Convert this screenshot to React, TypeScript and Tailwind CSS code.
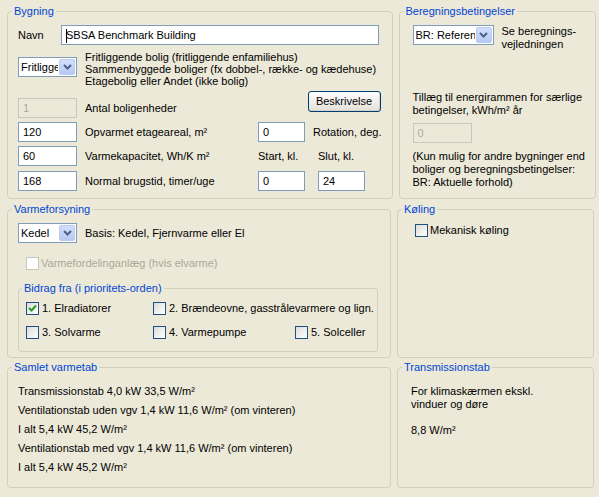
import React from "react";

function Box({ value, className = "", disabled = false }: { value: string; className?: string; disabled?: boolean }) {
  return (
    <div
      className={
        "h-[20px] shrink-0 border px-[4px] leading-[18px] " +
        (disabled ? "border-[#C9C7BA] bg-[#ECE9D8] text-[#ACA899] " : "border-[#7F9DB9] bg-white ") +
        className
      }
    >
      {value}
    </div>
  );
}

function Combo({ value, className = "" }: { value: string; className?: string }) {
  return (
    <div className={"flex h-[20px] shrink-0 border border-[#7F9DB9] bg-white " + className}>
      <div className="min-w-0 flex-1 overflow-hidden pl-[2px] leading-[18px]">{value}</div>
      <div className="m-px flex w-[16px] shrink-0 items-center justify-center rounded-[2px] border border-[#B8CBF5] bg-linear-to-b from-[#D3DEFB] to-[#B7C9F4]">
        <svg width="9" height="6" viewBox="0 0 9 6">
          <path d="M1 1 L4.5 4.5 L8 1" fill="none" stroke="#4D6185" strokeWidth="2" />
        </svg>
      </div>
    </div>
  );
}

function Check({ checked = false, disabled = false }: { checked?: boolean; disabled?: boolean }) {
  return (
    <span
      className={
        "flex h-[13px] w-[13px] shrink-0 items-center justify-center border " +
        (disabled ? "border-[#CAC8BB] bg-white" : "border-[#1C5180] bg-linear-to-br from-[#DCDCD7] to-white")
      }
    >
      {checked && (
        <svg width="9" height="9" viewBox="0 0 9 9">
          <path d="M1 4 L3.5 6.5 L8 1.5" fill="none" stroke="#21A121" strokeWidth="2" />
        </svg>
      )}
    </span>
  );
}

function Group({ title, className = "", children }: { title: string; className?: string; children: React.ReactNode }) {
  return (
    <fieldset className={"shrink-0 rounded-[4px] border border-[#D0D0BF] px-[4px] " + className}>
      <legend className="px-[2px] leading-[13px] text-[#0046D5]">{title}</legend>
      {children}
    </fieldset>
  );
}

export default function App() {
  return (
    <div className="h-[497px] w-[599px] overflow-hidden whitespace-nowrap bg-[#ECE9D8] pl-[7px] pt-[5px] font-['Liberation_Sans',Arial,sans-serif] text-[11px] text-black">
      {/* row 1 */}
      <div className="flex gap-[6px]">
        <Group title="Bygning" className="h-[194px] w-[384px]">
          <div className="px-[6px]">
            <div className="mt-[7px] flex items-center">
              <span className="w-[43px]">Navn</span>
              <div className="h-[20px] w-[318px] border border-[#7F9DB9] bg-white pl-[4px] leading-[18px]">
                <span className="-mr-[1px] inline-block h-[14px] w-px bg-black align-middle" />
                SBSA Benchmark Building
              </div>
            </div>
            <div className="mt-[6px] flex">
              <Combo value="Fritligge" className="mt-[6px] w-[59px]" />
              <div className="ml-[8px] leading-[12px]">
                <div>Fritliggende bolig (fritliggende enfamiliehus)</div>
                <div>Sammenbyggede boliger (fx dobbel-, række- og kædehuse)</div>
                <div>Etagebolig eller Andet (ikke bolig)</div>
              </div>
            </div>
            <div className="mt-[4px] flex h-[27px]">
              <Box value="1" disabled className="mt-[7px] w-[59px]" />
              <span className="ml-[8px] mt-[7px] leading-[21px]">Antal boligenheder</span>
              <button className="ml-auto mr-[1px] h-[21px] w-[73px] rounded-[3px] border border-[#003C74] bg-linear-to-b from-white to-[#E3E0D6] leading-[19px] shadow-[inset_-1px_-1px_0_#D6D0C5]">
                Beskrivelse
              </button>
            </div>
            <div className="mt-[4px] flex items-center">
              <Box value="120" className="w-[59px]" />
              <span className="ml-[8px] w-[173px]">Opvarmet etageareal, m²</span>
              <Box value="0" className="w-[47px]" />
              <span className="ml-[8px]">Rotation, deg.</span>
            </div>
            <div className="mt-[4px] flex items-center">
              <Box value="60" className="w-[59px]" />
              <span className="ml-[8px] w-[173px]">Varmekapacitet, Wh/K m²</span>
              <span className="w-[60px]">Start, kl.</span>
              <span>Slut, kl.</span>
            </div>
            <div className="mt-[5px] flex items-center">
              <Box value="168" className="w-[59px]" />
              <span className="ml-[8px] w-[173px]">Normal brugstid, timer/uge</span>
              <Box value="0" className="w-[47px]" />
              <Box value="24" className="ml-[13px] w-[47px]" />
            </div>
          </div>
        </Group>

        <Group title="Beregningsbetingelser" className="h-[194px] w-[197px]">
          <div className="pl-[9px]">
            <div className="mt-[7px] flex items-start">
              <Combo value="BR: Referen" className="w-[81px]" />
              <div className="ml-[8px] leading-[13px]">
                <div>Se beregnings-</div>
                <div>vejledningen</div>
              </div>
            </div>
            <div className="mt-[40px] leading-[13px]">
              <div>Tillæg til energirammen for særlige</div>
              <div>betingelser, kWh/m² år</div>
            </div>
            <Box value="0" disabled className="mt-[6px] w-[59px]" />
            <div className="mt-[7px] leading-[13px]">
              <div>(Kun mulig for andre bygninger end</div>
              <div>boliger og beregningsbetingelser:</div>
              <div>BR: Aktuelle forhold)</div>
            </div>
          </div>
        </Group>
      </div>

      {/* row 2 */}
      <div className="mt-[4px] flex gap-[6px]">
        <Group title="Varmeforsyning" className="h-[155px] w-[384px]">
          <div className="px-[6px]">
            <div className="mt-[7px] flex items-center">
              <Combo value="Kedel" className="w-[59px]" />
              <span className="ml-[8px]">Basis: Kedel, Fjernvarme eller El</span>
            </div>
            <div className="mt-[14px] flex h-[13px] items-center pl-[8px]">
              <Check disabled />
              <span className="ml-[2px] text-[#ACA899]">Varmefordelinganlæg (hvis elvarme)</span>
            </div>
            <fieldset className="mt-[12px] h-[70px] w-[358px] rounded-[4px] border border-[#D0D0BF] px-[3px]">
              <legend className="px-[2px] leading-[13px] text-[#0046D5]">Bidrag fra (i prioritets-orden)</legend>
              <div className="pl-[4px]">
                <div className="mt-[7px] flex h-[13px] items-center">
                  <div className="flex w-[127px] items-center">
                    <Check checked />
                    <span className="ml-[3px]">1. Elradiatorer</span>
                  </div>
                  <div className="flex items-center">
                    <Check />
                    <span className="ml-[3px]">2. Brændeovne, gasstrålevarmere og lign.</span>
                  </div>
                </div>
                <div className="mt-[11px] flex h-[13px] items-center">
                  <div className="flex w-[127px] items-center">
                    <Check />
                    <span className="ml-[3px]">3. Solvarme</span>
                  </div>
                  <div className="flex w-[142px] items-center">
                    <Check />
                    <span className="ml-[3px]">4. Varmepumpe</span>
                  </div>
                  <div className="flex items-center">
                    <Check />
                    <span className="ml-[3px]">5. Solceller</span>
                  </div>
                </div>
              </div>
            </fieldset>
          </div>
        </Group>

        <Group title="Køling" className="h-[155px] w-[197px]">
          <div className="pl-[13px]">
            <div className="mt-[8px] flex h-[13px] items-center">
              <Check />
              <span className="ml-[2px]">Mekanisk køling</span>
            </div>
          </div>
        </Group>
      </div>

      {/* row 3 */}
      <div className="mt-[3px] flex gap-[6px]">
        <Group title="Samlet varmetab" className="h-[127px] w-[384px]">
          <div className="mt-[8px] px-[6px] leading-[19px]">
            <div>Transmissionstab 4,0 kW 33,5 W/m²</div>
            <div>Ventilationstab uden vgv 1,4 kW 11,6 W/m² (om vinteren)</div>
            <div>I alt 5,4 kW 45,2 W/m²</div>
            <div>Ventilationstab med vgv 1,4 kW 11,6 W/m² (om vinteren)</div>
            <div>I alt 5,4 kW 45,2 W/m²</div>
          </div>
        </Group>

        <Group title="Transmissionstab" className="h-[127px] w-[197px]">
          <div className="mt-[11px] pl-[9px] leading-[13px]">
            <div>For klimaskærmen ekskl.</div>
            <div>vinduer og døre</div>
            <div className="h-[13px]" />
            <div>8,8 W/m²</div>
          </div>
        </Group>
      </div>
    </div>
  );
}
